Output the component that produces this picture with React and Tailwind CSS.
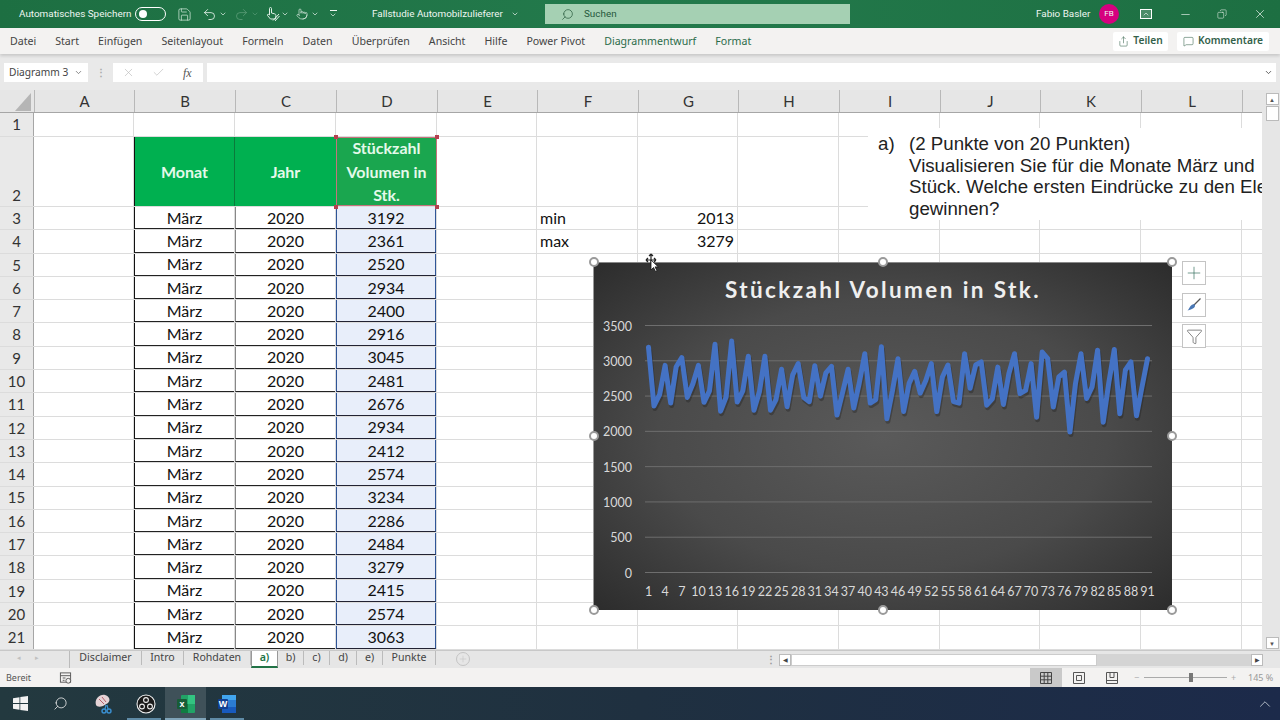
import React from "react";
import {
  Save, Undo2, Redo2, Search, ChevronDown, Pointer, Minus, X, Copy, Plus, Check, Share, MessageSquare, Filter,
  ChevronUp,
} from "lucide-react";

const COLS = [
  ["A", 100], ["B", 101], ["C", 101], ["D", 101], ["E", 100], ["F", 101],
  ["G", 100], ["H", 101], ["I", 101], ["J", 100], ["K", 101], ["L", 101],
];

const VALUES = [3192, 2361, 2520, 2934, 2400, 2916, 3045, 2481, 2676, 2934, 2412, 2574, 3234, 2286, 2484, 3279, 2415, 2574, 3063];

const SERIES = [
  ...VALUES,
  2300, 2560, 3063, 2300, 2450, 2880, 2350, 2800, 2960, 2480, 2420, 2930, 2500, 2830, 2920, 2230, 2550, 2880, 2330, 2680,
  3100, 2400, 2450, 3200, 2180, 2580, 3030, 2280, 2680, 2850, 2540, 2720, 2960, 2280, 2770, 2940, 2420, 2400, 3100, 2610,
  2940, 2985, 2370, 2460, 2910, 2380, 2820, 3100, 2535, 2580, 2960, 2200, 3125, 3030, 2345, 2770, 2840, 1990, 2680, 3100,
  2465, 2630, 3150, 2130, 2680, 3160, 2250, 2870, 2985, 2220, 2630, 3030,
];

const TABS = [["Disclaimer", 72], ["Intro", 42], ["Rohdaten", 67], ["a)", 27], ["b)", 26], ["c)", 26], ["d)", 27], ["e)", 26], ["Punkte", 53]];
const RIBBON = ["Datei", "Start", "Einfügen", "Seitenlayout", "Formeln", "Daten", "Überprüfen", "Ansicht", "Hilfe", "Power Pivot"];

const TitleBar = () => (
  <div className="h-[28px] flex items-center bg-gradient-to-r from-[#1d6f42] via-[#237a4c] to-[#1d6f42] text-[#eef6f1] shrink-0 text-[9.9px] font-['Roboto',sans-serif]">
    <span className="ml-[19px] w-[112px] whitespace-nowrap">Automatisches Speichern</span>
    <div className="ml-[4px] w-[31px] h-[14px] rounded-full border border-white flex items-center pl-[3px]">
      <div className="w-[8px] h-[8px] rounded-full bg-white" />
    </div>
    <Save size={15} strokeWidth={1.2} className="ml-[11px] text-[#cfe8d8]" />
    <Undo2 size={15} strokeWidth={1.3} className="ml-[10px]" />
    <ChevronDown size={8} className="ml-[2px]" />
    <Redo2 size={15} strokeWidth={1.3} className="ml-[7px] text-[#5b9c78]" />
    <ChevronDown size={8} className="ml-[2px] text-[#5b9c78]" />
    <svg width="14" height="16" viewBox="0 0 14 16" fill="none" stroke="#dff0e6" strokeWidth="1" className="ml-[7px]">
      <path d="M3.500 9V2.500a1 1 0 0 1 2 0V7l3 .8c1.200.3 1.500 1 1.400 2L9.500 13H4.500L1.500 9.500c-.5-.8.5-1.700 1.200-1z" />
      <path d="M7 14.500 13 8M9 15l4.500-5" />
    </svg>
    <ChevronDown size={8} className="ml-[1px]" />
    <Pointer size={12} strokeWidth={1.2} className="ml-[7px]" />
    <ChevronDown size={8} className="ml-[3px]" />
    <div className="ml-[10px] w-[8px] flex flex-col items-center">
      <div className="w-[7px] h-px bg-[#eef6f1]" />
      <ChevronDown size={8} />
    </div>
    <span className="ml-[35px] w-[134px] whitespace-nowrap">Fallstudie Automobilzulieferer</span>
    <ChevronDown size={8} className="ml-[5px]" />
    <div className="ml-[26px] w-[305px] h-[20px] bg-[#a5d0b3] flex items-center text-[#26583c]">
      <Search size={13} strokeWidth={1.3} className="ml-[16px] -scale-x-100" />
      <span className="ml-[10px]">Suchen</span>
    </div>
    <span className="ml-[186px] w-[56px] whitespace-nowrap">Fabio Basler</span>
    <div className="ml-[7px] w-[20px] h-[20px] rounded-full bg-[#d6007f] flex items-center justify-center text-[8px]">FB</div>
    <div className="ml-[21px] w-[12px] h-[10px] border border-white bg-white/20 flex items-center justify-center">
      <ChevronUp size={8} strokeWidth={2} />
    </div>
    <Minus size={13} strokeWidth={1.2} className="ml-[27px]" />
    <Copy size={10} strokeWidth={1.3} className="ml-[25px] -scale-x-100" />
    <X size={14} strokeWidth={1.2} className="ml-[26px]" />
  </div>
);

const Ribbon = () => (
  <div className="h-[26px] flex items-center bg-[#f3f2f1] shrink-0 text-[10.6px] text-[#444] pl-[10px] relative shadow-[0_2px_3px_rgba(0,0,0,0.14)] z-10">
    <div className="flex gap-[19px] pt-[1px]">
      {RIBBON.map((t) => (
        <span key={t} className="whitespace-nowrap">{t}</span>
      ))}
      <span className="whitespace-nowrap text-[#2a6b49]">Diagrammentwurf</span>
      <span className="whitespace-nowrap text-[#2a6b49]">Format</span>
    </div>
    <div className="ml-auto flex gap-[9px] mr-[11px] font-semibold text-[10.2px] text-[#33614a]">
      <div className="w-[55px] h-[19px] bg-white flex items-center justify-center gap-[4px] rounded-[2px]">
        <Share size={11} strokeWidth={1.2} />
        <span>Teilen</span>
      </div>
      <div className="w-[92px] h-[19px] bg-white flex items-center justify-center gap-[4px] rounded-[2px]">
        <MessageSquare size={11} strokeWidth={1.2} />
        <span>Kommentare</span>
      </div>
    </div>
  </div>
);

const FormulaBar = () => (
  <div className="h-[36px] bg-[#e9e9e9] shrink-0 pt-[9px] pl-[4px] pr-[4px]">
    <div className="h-[19px] flex items-stretch text-[10.2px] text-[#444]">
      <div className="w-[84px] bg-white flex items-center justify-between px-[5px]">
        <span>Diagramm 3</span>
        <ChevronDown size={9} strokeWidth={2} className="text-[#666]" />
      </div>
      <div className="w-[25px] flex items-center justify-center text-[#aaa] font-bold text-[10px]">⋮</div>
      <div className="w-[90px] bg-white flex items-center text-[#bbb]">
        <X size={13} strokeWidth={1.2} className="ml-[9px]" />
        <Check size={13} strokeWidth={1.2} className="ml-[17px]" />
        <span className="ml-[18px] text-[#555] italic text-[12px] font-['Liberation_Serif',serif]">fx</span>
      </div>
      <div className="ml-[4px] flex-1 bg-white flex items-center justify-end pr-[3px]">
        <ChevronDown size={9} strokeWidth={2.4} className="text-[#555]" />
      </div>
    </div>
  </div>
);

const ColHeader = () => (
  <div className="h-[23px] flex bg-[#e6e6e6] border-b border-[#a6a6a6] text-[15px] text-[#333]">
    <div className="w-[34px] flex items-end justify-end pr-[3px] pb-[1px]">
      <div className="w-[16px] h-[18px] bg-[#b5b5b5] [clip-path:polygon(100%_0,100%_100%,0_100%)]" />
    </div>
    {COLS.map(([c, w]) => (
      <div key={c} style={{ width: w }} className="flex items-center justify-center border-l border-[#b8b8b8] pt-[1px]">
        {c}
      </div>
    ))}
    <div className="flex-1 border-l border-[#b8b8b8]" />
  </div>
);

const RowHead = ({ n, bottom }) => (
  <div className={`w-[34px] shrink-0 bg-[#e9e9e9] border-r border-[#a6a6a6] flex justify-center text-[15px] text-[#333] ${bottom ? "items-end" : "items-center"}`}>
    {n}
  </div>
);

// one plain row of white cells; kids fills in columns by letter
const Row = ({ n, height, kids = {}, bottom }) => (
  <div style={{ height }} className="flex border-b border-[#dcdcdc]">
    <RowHead n={n} bottom={bottom} />
    {COLS.map(([c, w]) => (
      <div key={c} style={{ width: w }} className="border-r border-[#dcdcdc] shrink-0">
        {kids[c]}
      </div>
    ))}
  </div>
);

const Body = ({ children, className }) => (
  <div className={`h-full flex items-center justify-center text-[16px] text-[#111] ${className}`}>{children}</div>
);

const HeaderCell = ({ lines, className }) => (
  <div className={`h-full flex flex-col items-center justify-center text-[16px] leading-[23.5px] font-bold text-[#e4f9ea] ${className}`}>
    {lines.map((l) => (
      <span key={l} className="whitespace-nowrap">{l}</span>
    ))}
  </div>
);

const Sheet = () => (
  <div className="flex-1 bg-white overflow-hidden">
    <ColHeader />
    <Row n={1} height={24} />
    <Row
      n={2}
      height={70}
      bottom
      kids={{
        B: <HeaderCell lines={["Monat"]} className="bg-[#00b050] border-l border-[#111] border-r border-r-[#0b7a3b] -mr-px" />,
        C: <HeaderCell lines={["Jahr"]} className="bg-[#00b050] -mr-px" />,
        D: <HeaderCell lines={["Stückzahl", "Volumen in", "Stk."]} className="bg-[#1aa64f] border border-[#c4737c] -mr-px" />,
      }}
    />
    {VALUES.map((v, i) => (
      <Row
        key={i}
        n={i + 3}
        height={23.3}
        kids={{
          B: <Body className="border-l border-[#111] border-b border-b-[#222]">März</Body>,
          C: <Body className="border-l border-[#888] border-b border-b-[#222]">2020</Body>,
          D: <Body className="bg-[#e8eefa] border-l border-r border-[#2f5597] border-b border-b-[#223]">{v}</Body>,
          ...(i === 0 && {
            F: <Body className="!justify-start pl-[3px]">min</Body>,
            G: <Body className="!justify-end pr-[3px]">2013</Body>,
          }),
          ...(i === 1 && {
            F: <Body className="!justify-start pl-[3px]">max</Body>,
            G: <Body className="!justify-end pr-[3px]">3279</Body>,
          }),
        }}
      />
    ))}
  </div>
);

const ScrollBarV = () => (
  <div className="w-[18px] bg-[#e6e6e6] shrink-0 flex flex-col items-center pt-[3px] pb-[1px] pl-[2px]">
    <div className="w-[13px] h-[12px] bg-white border border-[#bbb] flex items-center justify-center text-[#555] text-[6px]">▲</div>
    <div className="w-[13px] h-[15px] mt-[1px] bg-white border border-[#bbb]" />
    <div className="flex-1" />
    <div className="w-[13px] h-[12px] bg-white border border-[#bbb] flex items-center justify-center text-[#555] text-[6px]">▼</div>
  </div>
);

const Handle = ({ className }) => (
  <div className={`absolute w-[10px] h-[10px] rounded-full bg-white border-2 border-[#9a9a9a] -translate-x-1/2 -translate-y-1/2 ${className}`} />
);

const Chart = () => {
  const x = (i) => 54.5 + i * 5.545;
  const y = (v) => 309.5 - (v / 3500) * 247;
  const points = SERIES.map((v, i) => `${x(i).toFixed(1)},${y(v).toFixed(1)}`).join(" ");
  return (
    <div className="absolute left-[593px] top-[172px] w-[579px] h-[348px] bg-[radial-gradient(ellipse_at_center,#5a5a5a_0%,#4a4a4a_55%,#2c2c2c_100%)] border-t border-t-[#888] border-l border-l-[#999]">
      <div className="absolute top-[10px] inset-x-0 text-center text-[22.5px] font-bold tracking-[2.4px] text-[#efefef] whitespace-nowrap font-['Lato',sans-serif]">
        Stückzahl Volumen in Stk.
      </div>
      <svg width="579" height="348" className="absolute inset-0">
        {[0, 500, 1000, 1500, 2000, 2500, 3000, 3500].map((v) => (
          <g key={v}>
            <line x1="51" x2="558" y1={y(v)} y2={y(v)} stroke="#6e6e6e" strokeWidth="1" />
            <text x="38" y={y(v) + 5} textAnchor="end" fontSize="12.5" fill="#d9d9d9" fontFamily="Lato, sans-serif">{v}</text>
          </g>
        ))}
        <polyline points={points} fill="none" stroke="#1c1c1c" strokeOpacity="0.35" strokeWidth="5" strokeLinejoin="round" transform="translate(1 2.5)" />
        <polyline points={points} fill="none" stroke="#4472c4" strokeWidth="5" strokeLinejoin="round" strokeLinecap="round" />
        {SERIES.map((_, i) =>
          i % 3 === 0 ? (
            <text key={i} x={x(i)} y="333" textAnchor="middle" fontSize="12.5" fill="#d9d9d9" fontFamily="Lato, sans-serif">{i + 1}</text>
          ) : null
        )}
      </svg>
    </div>
  );
};

const SideButton = ({ className, children }) => (
  <div className={`absolute left-[1182px] w-[24px] h-[24px] bg-white border border-[#c4c4c4] flex items-center justify-center ${className}`}>
    {children}
  </div>
);

const Overlays = () => (
  <>
    {/* text box over the cells */}
    <div className="absolute left-[868px] top-[38px] w-[394px] h-[92px] bg-white overflow-hidden font-['Liberation_Sans',sans-serif] text-[18.7px] leading-[21.7px] text-[#222] pt-[5px] flex">
      <span className="ml-[10px] w-[31px] shrink-0">a)</span>
      <div className="whitespace-nowrap">
        <div>(2 Punkte von 20 Punkten)</div>
        <div>Visualisieren Sie für die Monate März und</div>
        <div>Stück. Welche ersten Eindrücke zu den Ele</div>
        <div>gewinnen?</div>
      </div>
    </div>

    {/* selected header cell corners */}
    {[[336, 47], [437, 47], [336, 117], [437, 117]].map(([l, t]) => (
      <div key={`${l}-${t}`} style={{ left: l - 2, top: t - 2 }} className="absolute w-[4px] h-[4px] bg-[#b5404f]" />
    ))}

    <Chart />
    <Handle className="left-[594px] top-[172px]" />
    <Handle className="left-[883px] top-[172px]" />
    <Handle className="left-[1172px] top-[172px]" />
    <Handle className="left-[594px] top-[346px]" />
    <Handle className="left-[1172px] top-[346px]" />
    <Handle className="left-[594px] top-[520px]" />
    <Handle className="left-[883px] top-[520px]" />
    <Handle className="left-[1172px] top-[520px]" />

    <SideButton className="top-[171px]"><Plus size={20} strokeWidth={0.8} className="text-[#2d6b57]" /></SideButton>
    <SideButton className="top-[203px]">
      <svg width="16" height="16" viewBox="0 0 16 16">
        <path d="M14.500 1.500 7.500 8.500" stroke="#555" strokeWidth="1.200" />
        <path d="M8.500 7.500c1 1 .5 2.500-.8 3.500-1.700 1.300-3.700 2-6.200 2.500 1.500-1.200 1.800-3 3-4.500 1-1.300 3-2.500 4-1.500z" fill="#4a78b5" />
      </svg>
    </SideButton>
    <SideButton className="top-[234px]"><Filter size={17} strokeWidth={1} className="text-[#555]" /></SideButton>

    {/* move cursor */}
    <svg width="16" height="20" viewBox="0 0 16 20" className="absolute left-[644px] top-[163px]">
      <path d="M7 1v12M2 7h10M7 1 5 3M7 1l2 2M2 7l2-2M2 7l2 2M12 7l-2-2M12 7l-2 2" stroke="#222" strokeWidth="1.200" fill="none" />
      <path d="M7 7v10l2.500-2.500 2 4 1.500-.8-2-3.800h3.300z" fill="#fff" stroke="#111" strokeWidth="0.8" />
    </svg>
  </>
);

const TabsBar = () => (
  <div className="h-[18px] bg-[#e6e6e6] border-t border-[#c8c8c8] shrink-0 flex items-start text-[10.6px] text-[#444]">
    <div className="w-[69px] h-[14px] flex items-center text-[#c0c0c0] text-[7px] pl-[17px] gap-[14px]">
      <span>◂</span>
      <span>▸</span>
    </div>
    <div className="flex border-l border-[#bbb]">
      {TABS.map(([t, w]) =>
        t === "a)" ? (
          <div key={t} style={{ width: w }} className="h-[17px] pb-[2px] bg-white text-[#217346] font-semibold border-x border-[#999] border-b-2 border-b-[#217346] flex items-center justify-center">
            {t}
          </div>
        ) : (
          <div key={t} style={{ width: w }} className="h-[14px] border-r border-[#bbb] flex items-center justify-center">
            {t}
          </div>
        )
      )}
    </div>
    <div className="ml-[20px] mt-[1px] w-[14px] h-[14px] rounded-full border border-[#c4c4c4] flex items-center justify-center text-[#c4c4c4]">
      <Plus size={10} strokeWidth={1.4} />
    </div>
    <div className="ml-[296px] w-[4px] mt-[1px] text-[#999] font-bold text-[10px] leading-[14px]">⋮</div>
    <div className="ml-[9px] mt-[3px] h-[12px] w-[484px] flex items-stretch bg-[#d4d4d4]">
      <div className="w-[12px] bg-white border border-[#bbb] flex items-center justify-center text-[6px] text-[#444]">◀</div>
      <div className="w-[306px] bg-white border border-[#ccc]" />
      <div className="flex-1" />
      <div className="w-[12px] bg-white border border-[#bbb] flex items-center justify-center text-[6px] text-[#444]">▶</div>
    </div>
  </div>
);

const StatusBar = () => (
  <div className="h-[19px] bg-[#f3f2f1] shrink-0 flex items-center text-[9px] text-[#555]">
    <span className="ml-[6px] w-[53px]">Bereit</span>
    <svg width="13" height="14" viewBox="0 0 14 14" fill="none" stroke="#555">
      <rect x="1.500" y="1.500" width="11" height="10" />
      <path d="M1.500 4.500h11M4 7h3M4 9.500h2" />
      <circle cx="10" cy="10" r="2.600" fill="#f3f2f1" />
    </svg>
    <div className="ml-[958px] w-[32px] h-[19px] bg-[#c9c9c9] flex items-center justify-center">
      <svg width="12" height="12" viewBox="0 0 12 12" fill="none" stroke="#444">
        <path d="M.5.5h11v11H.5zM4.200.5v11M7.800.5v11M.5 4.200h11M.5 7.800h11" />
      </svg>
    </div>
    <svg width="12" height="12" viewBox="0 0 12 12" fill="none" stroke="#555" className="ml-[11px]">
      <path d="M.5.5h11v11H.5zM3.500 3.500h5v5h-5z" />
    </svg>
    <svg width="12" height="12" viewBox="0 0 12 12" fill="none" stroke="#555" className="ml-[21px]">
      <path d="M.5.5h11v11H.5zM.5 8.500h11M4 .5v5h4v-5" />
    </svg>
    <span className="ml-[16px] w-[6px] text-[#aaa]">−</span>
    <div className="ml-[4px] w-[83px] h-[1px] bg-[#aaa] relative">
      <div className="absolute left-[45px] -top-[4px] w-[4px] h-[9px] bg-[#777]" />
    </div>
    <span className="ml-[4px] w-[8px] text-[#aaa]">+</span>
    <span className="ml-[9px] text-[#999] whitespace-nowrap">145 %</span>
  </div>
);

const Taskbar = () => (
  <div className="h-[33px] shrink-0 flex items-stretch bg-gradient-to-r from-[#23393f] via-[#1f3040] to-[#1c2a4a]">
    <div className="w-[40px] flex items-center justify-center">
      <svg width="15" height="15" viewBox="0 0 15 15" fill="#f2f2f2">
        <path d="M0 2.200 6.500 1.200v5.900H0zM7.300 1.100 15 0v7.100H7.300zM0 7.900h6.500v5.900L0 12.800zM7.300 7.900H15V15l-7.700-1.100z" />
      </svg>
    </div>
    <div className="w-[40px] flex items-center justify-center text-[#eee]">
      <Search size={15} strokeWidth={1.3} className="-scale-x-100" />
    </div>
    <div className="w-[46px] flex items-center justify-center">
      <svg width="20" height="22" viewBox="0 0 20 22">
        <path d="M3 12C1 6 7 1 12 2c4 1 6 5 3 8l-5 3c-3 1-6 1-7-1z" fill="#e5d3d6" />
        <path d="M6 6l5 5M9 4l4 5" stroke="#b5606c" strokeWidth="1" />
        <circle cx="11" cy="18" r="2" fill="none" stroke="#3a8fd0" strokeWidth="1.400" />
        <circle cx="16" cy="18" r="2" fill="none" stroke="#3a8fd0" strokeWidth="1.400" />
        <path d="M12 16l1-4M15 16l-1-4" stroke="#3a8fd0" strokeWidth="1.200" />
      </svg>
    </div>
    <div className="w-[39px] relative flex items-center justify-center">
      <svg width="20" height="20" viewBox="0 0 20 20" fill="none" stroke="#eee">
        <circle cx="10" cy="10" r="9" fill="#1b1b1b" strokeWidth="1.100" />
        <circle cx="10" cy="6" r="2.400" strokeWidth="1.100" />
        <circle cx="6" cy="12.500" r="2.400" strokeWidth="1.100" />
        <circle cx="14" cy="12.500" r="2.400" strokeWidth="1.100" />
      </svg>
      <div className="absolute bottom-0 left-px right-[4px] h-[2px] bg-[#5f8ba6]" />
    </div>
    <div className="w-[41px] relative bg-[#3f5159] flex items-center justify-center">
      <svg width="20" height="20" viewBox="0 0 20 20">
        <rect x="5" y="1" width="14" height="18" rx="1" fill="#21a366" />
        <rect x="12" y="1" width="7" height="9" fill="#33c481" />
        <rect x="5" y="10" width="7" height="9" fill="#107c41" />
        <rect x="1" y="5" width="10" height="10" rx="1" fill="#185c37" />
        <text x="6" y="13" textAnchor="middle" fontSize="9" fontWeight="700" fill="#fff" fontFamily="Liberation Sans, sans-serif">x</text>
      </svg>
      <div className="absolute bottom-0 inset-x-0 h-[2px] bg-[#7fa3b8]" />
    </div>
    <div className="w-[41px] relative flex items-center justify-center">
      <svg width="20" height="20" viewBox="0 0 20 20">
        <rect x="5" y="1" width="14" height="18" rx="1" fill="#2b7cd3" />
        <rect x="5" y="1" width="14" height="5" fill="#41a5ee" />
        <rect x="5" y="13" width="14" height="6" fill="#185abd" />
        <rect x="1" y="5" width="10" height="10" rx="1" fill="#103f91" />
        <text x="6" y="13" textAnchor="middle" fontSize="9" fontWeight="700" fill="#fff" fontFamily="Liberation Sans, sans-serif">W</text>
      </svg>
      <div className="absolute bottom-0 left-[4px] right-[3px] h-[2px] bg-[#5f8ba6]" />
    </div>
    <div className="flex-1 flex items-center justify-end pr-[6px]">
      <ChevronUp size={18} strokeWidth={1} className="text-[#dfe6ea]" />
    </div>
  </div>
);

export default function App() {
  return (
    <div className="w-[1280px] h-[720px] flex flex-col overflow-hidden bg-white font-['Noto_Sans',sans-serif]">
      <TitleBar />
      <Ribbon />
      <FormulaBar />
      <div className="relative h-[560px] flex shrink-0 font-['Lato',sans-serif]">
        <Sheet />
        <ScrollBarV />
        <Overlays />
      </div>
      <TabsBar />
      <StatusBar />
      <Taskbar />
    </div>
  );
}
